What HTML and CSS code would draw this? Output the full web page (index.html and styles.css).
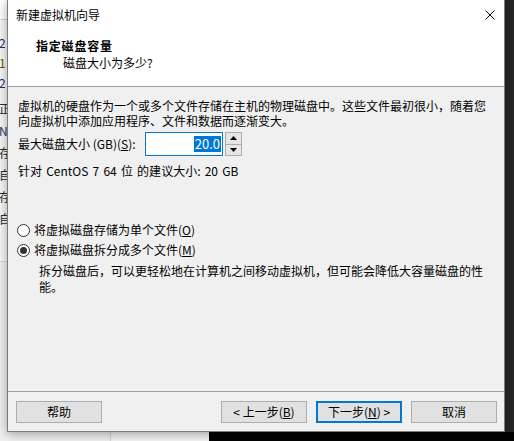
FILE: index.html
```html
<!DOCTYPE html>
<html lang="zh-CN">
<head>
<meta charset="utf-8">
<title>新建虚拟机向导</title>
<link rel="stylesheet" href="styles.css">
</head>
<body>
<div class="desk">
  <div class="bgwin">
    <div class="bgwin-top"></div>
    <div class="bgwin-list">
      <div class="grp1">
        <div class="c-blue">2</div>
        <div class="c-gold">1</div>
        <div class="c-blue">2</div>
      </div>
      <div class="grp2">
        <div class="c-dark">正</div>
        <div class="c-blue">N</div>
        <div class="c-dark">存</div>
        <div class="c-dark">自</div>
        <div class="c-dark">存</div>
        <div class="c-dark">自</div>
      </div>
    </div>
    <div class="bgwin-bottom"><div class="bgwin-pane"></div></div>
  </div>
  <div class="rightstrip"></div>

  <div class="dialog">
    <div class="titlebar">
      <span class="title">新建虚拟机向导</span>
      <svg class="close" width="10" height="10" viewBox="0 0 10 10"><path d="M0.5 0.5 L9.5 9.5 M9.5 0.5 L0.5 9.5" stroke="#000" stroke-width="1" fill="none"/></svg>
    </div>
    <div class="header">
      <div class="h-title">指定磁盘容量</div>
      <div class="h-sub">磁盘大小为多少?</div>
    </div>
    <div class="body">
      <div class="intro">
        <div class="line">虚拟机的硬盘作为一个或多个文件存储在主机的物理磁盘中。这些文件最初很小，随着您</div>
        <div class="line">向虚拟机中添加应用程序、文件和数据而逐渐变大。</div>
      </div>
      <div class="size-row">
        <span class="label">最大磁盘大小 (GB)(<u>S</u>):</span>
        <div class="spin-input"><span class="sel">20.0</span></div>
        <div class="spinner">
          <div class="sp-btn"><svg width="7" height="4" viewBox="0 0 7 4"><path d="M0 4 L3.5 0 L7 4 Z" fill="#000"/></svg></div>
          <div class="sp-btn"><svg width="7" height="4" viewBox="0 0 7 4"><path d="M0 0 L7 0 L3.5 4 Z" fill="#000"/></svg></div>
        </div>
      </div>
      <p class="rec">针对 CentOS 7 64 位 的建议大小: 20 GB</p>
      <div class="radio-row first"><span class="radio"></span><span>将虚拟磁盘存储为单个文件(<u>O</u>)</span></div>
      <div class="radio-row"><span class="radio checked"></span><span>将虚拟磁盘拆分成多个文件(<u>M</u>)</span></div>
      <p class="desc">拆分磁盘后，可以更轻松地在计算机之间移动虚拟机，但可能会降低大容量磁盘的性<br>能。</p>
    </div>
    <div class="footer">
      <button class="btn">帮助</button>
      <div class="spacer"></div>
      <button class="btn">&lt; 上一步(<u>B</u>)</button>
      <button class="btn default">下一步(<u>N</u>) &gt;</button>
      <button class="btn">取消</button>
    </div>
  </div>
</div>
</body>
</html>
```

FILE: styles.css
```css
* { box-sizing: border-box; }
html, body { margin: 0; padding: 0; }
body {
  width: 514px;
  height: 441px;
  overflow: hidden;
  background: #000;
  font-family: "Noto Sans CJK SC", "Microsoft YaHei", sans-serif;
  font-size: 12px;
  color: #000;
}
.desk { position: relative; width: 514px; height: 441px; overflow: hidden; }

/* background window on the left */
.bgwin {
  position: absolute;
  left: 0; top: 0;
  width: 209px; height: 441px;
  background: #f7f7f7;
  display: flex;
  flex-direction: column;
}
.bgwin-top { height: 20px; background: #fff; border-bottom: 1px solid #d6d6d6; flex: none; }
.bgwin-list { height: 241px; flex: none; padding-top: 13px; margin-left: -1px; font-size: 12px; }
.bgwin-list .grp1 div { height: 20px; line-height: 20px; }
.bgwin-list .grp2 { margin-top: 5px; }
.bgwin-list .grp2 div { height: 22px; line-height: 22px; }
.c-blue { color: #1d2f66; }
.c-gold { color: #6b5200; }
.c-dark { color: #2a2a2a; }
.bgwin-bottom { flex: 1; border-top: 1px solid #d9d9d9; background: #f0f0f0; display: flex; }
.bgwin-pane { margin-left: 110px; flex: 1; border-left: 1px solid #d4d4d4; background: #f4f4f4; }

.rightstrip {
  position: absolute;
  left: 505px; top: 0;
  width: 9px; height: 432px;
  background: #262626;
}

/* dialog window */
.dialog {
  position: absolute;
  left: 7px; top: 0;
  width: 498px; height: 432px;
  background: #f0f0f0;
  border: 1px solid #7c7c7c;
  border-top: none;
  box-shadow: 0 2px 10px rgba(0,0,0,0.35);
  display: flex;
  flex-direction: column;
}
.titlebar {
  height: 30px;
  flex: none;
  background: #fff;
  display: flex;
  align-items: center;
  padding-left: 8px;
  padding-right: 9px;
}
.title { flex: 1; line-height: 16px; }
.close { display: block; }

.header {
  height: 57px;
  flex: none;
  background: #fff;
  border-bottom: 1px solid #a0a0a0;
  padding: 8px 0 0 28px;
}
.h-title { font-weight: bold; line-height: 16px; letter-spacing: 0.8px; }
.h-sub { line-height: 16px; margin-top: 1px; padding-left: 27px; }

.body {
  flex: 1;
  padding: 11px 0 0 10px;
  white-space: nowrap;
}
.body p { margin: 0; }
.intro .line { height: 15px; line-height: 15px; }
.size-row {
  display: flex;
  align-items: center;
  margin-top: 4px;
  height: 24px;
}
.label { line-height: 16px; width: 127px; }
.spin-input {
  width: 78px; height: 24px;
  background: #fff;
  border: 1px solid #0078d7;
  display: flex;
  align-items: center;
  justify-content: flex-end;
  padding-right: 1px;
}
.sel {
  background: #0078d7;
  color: #fff;
  font-size: 13px;
  line-height: 16px;
  padding: 0 1px;
}
.spinner {
  margin-left: 2px;
  width: 17px; height: 24px;
  display: flex;
  flex-direction: column;
  border: 1px solid #adadad;
  background: #e5e5e5;
}
.sp-btn {
  flex: 1;
  display: flex;
  align-items: center;
  justify-content: center;
}
.sp-btn + .sp-btn { border-top: 1px solid #adadad; }
.sp-btn svg { display: block; }

.rec { line-height: 15px; margin-top: 7px !important; word-spacing: 1.5px; }

.radio-row {
  display: flex;
  align-items: center;
  height: 16px;
  line-height: 16px;
  margin-top: 4px;
  margin-left: -1px;
}
.radio-row.first { margin-top: 44px; }
.radio {
  width: 13px; height: 13px;
  border: 1px solid #333;
  border-radius: 50%;
  background: #fff;
  margin-right: 4px;
  flex: none;
  display: flex;
  align-items: center;
  justify-content: center;
}
.radio.checked::after {
  content: "";
  width: 7px; height: 7px;
  border-radius: 50%;
  background: #333;
}
.desc { line-height: 16px; margin-top: 5px !important; padding-left: 21px; }

.footer {
  height: 40px;
  flex: none;
  border-top: 1px solid #a0a0a0;
  display: flex;
  align-items: flex-start;
  padding: 9px 7px 0 8px;
  gap: 9px;
}
.spacer { flex: 1; }
.btn {
  width: 86px; height: 22px;
  background: #e1e1e1;
  border: 1px solid #adadad;
  font-family: inherit;
  font-size: 12px;
  line-height: 16px;
  color: #000;
  padding: 0;
  margin: 0;
}
.btn.default { border: 2px solid #0078d7; }
u { text-decoration: underline; text-underline-offset: 1px; }
```
